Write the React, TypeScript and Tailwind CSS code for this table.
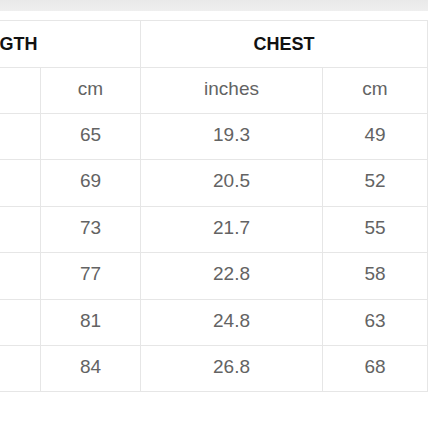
import React from "react";

const rows = [
  ["65", "19.3", "49"],
  ["69", "20.5", "52"],
  ["73", "21.7", "55"],
  ["77", "22.8", "58"],
  ["81", "24.8", "63"],
  ["84", "26.8", "68"],
];

export default function App() {
  const cell = "border border-[#e6e6e6] text-center align-middle p-0";
  const val = `${cell} pb-[3px]`;
  return (
    <div className="w-[428px] h-[428px] overflow-hidden bg-white" style={{ fontFamily: "'Liberation Sans', Arial, sans-serif" }}>
      <div className="h-[11px] bg-gradient-to-b from-[#e9e9e9] to-[#efefef]" />
      <div className="h-[9px] bg-white" />
      <table className="ml-[-140px] w-[647px] min-w-[647px] table-fixed border-collapse text-[19px] text-[#636363]">
        <colgroup>
          <col className="w-[80px]" />
          <col className="w-[100px]" />
          <col className="w-[100px]" />
          <col className="w-[182px]" />
          <col className="w-[105px]" />
          <col className="w-[80px]" />
        </colgroup>
        <thead>
          <tr className="h-[47px]">
            <th colSpan={3} className={`${cell} text-[18px] font-bold text-[#111]`}>LENGTH</th>
            <th colSpan={2} className={`${cell} text-[18px] font-bold text-[#111]`}>CHEST</th>
            <th className={cell}></th>
          </tr>
        </thead>
        <tbody>
          <tr className="h-[46px]">
            <td className={cell}></td>
            <td className={cell}></td>
            <td className={val}>cm</td>
            <td className={val}>inches</td>
            <td className={val}>cm</td>
            <td className={cell}></td>
          </tr>
          {rows.map((r) => (
            <tr key={r[0]} className="h-[46.4px]">
              <td className={cell}></td>
              <td className={cell}></td>
              <td className={val}>{r[0]}</td>
              <td className={val}>{r[1]}</td>
              <td className={val}>{r[2]}</td>
              <td className={cell}></td>
            </tr>
          ))}
        </tbody>
      </table>
    </div>
  );
}
